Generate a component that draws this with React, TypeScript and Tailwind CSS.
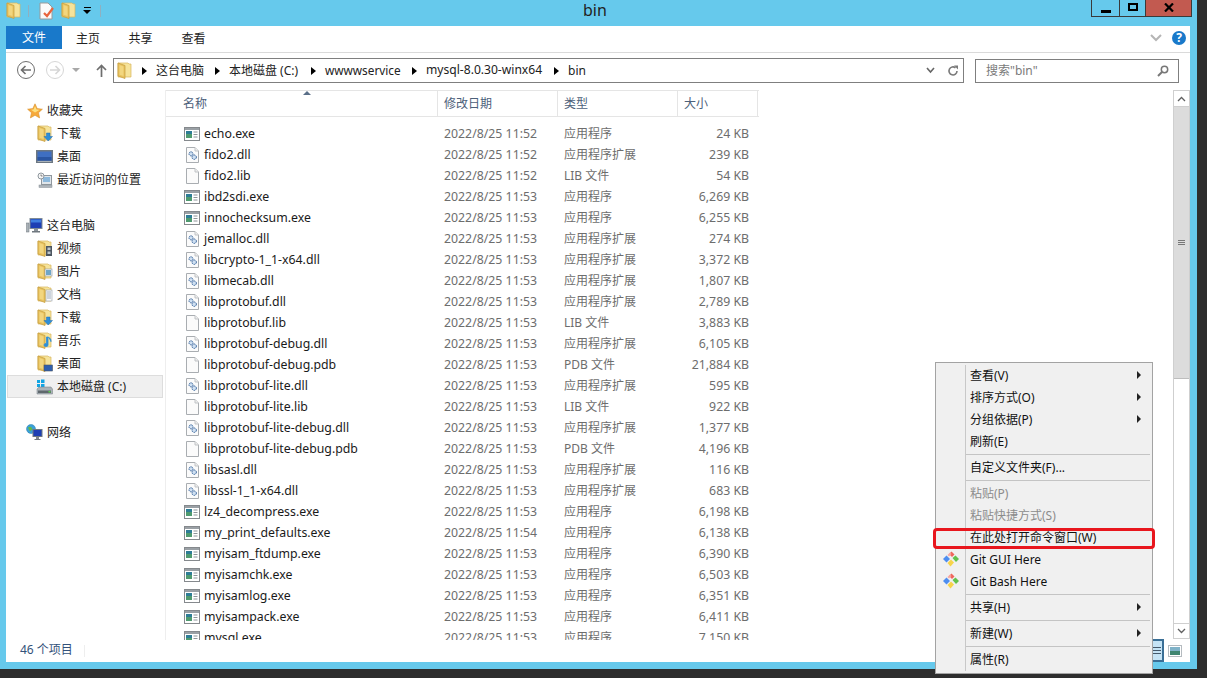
const EXT = '应用程序扩展';
const APP = '应用程序';
const LIB = 'LIB 文件';
const PDB = 'PDB 文件';

const files = [
    ['echo.exe', '11:52', APP, '24 KB'],
    ['fido2.dll', '11:52', EXT, '239 KB'],
    ['fido2.lib', '11:52', LIB, '54 KB'],
    ['ibd2sdi.exe', '11:53', APP, '6,269 KB'],
    ['innochecksum.exe', '11:53', APP, '6,255 KB'],
    ['jemalloc.dll', '11:53', EXT, '274 KB'],
    ['libcrypto-1_1-x64.dll', '11:53', EXT, '3,372 KB'],
    ['libmecab.dll', '11:53', EXT, '1,807 KB'],
    ['libprotobuf.dll', '11:53', EXT, '2,789 KB'],
    ['libprotobuf.lib', '11:53', LIB, '3,883 KB'],
    ['libprotobuf-debug.dll', '11:53', EXT, '6,105 KB'],
    ['libprotobuf-debug.pdb', '11:53', PDB, '21,884 KB'],
    ['libprotobuf-lite.dll', '11:53', EXT, '595 KB'],
    ['libprotobuf-lite.lib', '11:53', LIB, '922 KB'],
    ['libprotobuf-lite-debug.dll', '11:53', EXT, '1,377 KB'],
    ['libprotobuf-lite-debug.pdb', '11:53', PDB, '4,196 KB'],
    ['libsasl.dll', '11:53', EXT, '116 KB'],
    ['libssl-1_1-x64.dll', '11:53', EXT, '683 KB'],
    ['lz4_decompress.exe', '11:53', APP, '6,198 KB'],
    ['my_print_defaults.exe', '11:54', APP, '6,138 KB'],
    ['myisam_ftdump.exe', '11:53', APP, '6,390 KB'],
    ['myisamchk.exe', '11:53', APP, '6,503 KB'],
    ['myisamlog.exe', '11:53', APP, '6,351 KB'],
    ['myisampack.exe', '11:53', APP, '6,411 KB'],
    ['mysql.exe', '11:53', APP, '7,150 KB'],
];

function Folder({ overlay }: { overlay?: React.ReactNode }) {
    return (
        <svg width="16" height="17" viewBox="0 0 16 17">
            <path d="M1 1h10l1 1h2v13H1z" fill="#f6e39a" stroke="#d8b65c" strokeWidth="0.700" />
            <path d="M1 1l7 2.500V16.500L1 14z" fill="#e8c25f" stroke="#c49c3c" strokeWidth="0.700" />
            <path d="M2.500 3l4 1.500v9.500l-4-1.300z" fill="#f2d67f" />
            {overlay}
        </svg>
    );
}

function ExeIcon() {
    return (
        <svg width="16" height="14" viewBox="0 0 16 14">
            <rect x="0.500" y="0.500" width="15" height="13" fill="#fff" stroke="#85898d" />
            <rect x="1" y="1" width="14" height="2" fill="#9aa0a5" />
            <rect x="2" y="4" width="6" height="7" fill="#2e7d96" />
            <rect x="2" y="7" width="6" height="4" fill="#4f9a6f" />
            <path d="M9.500 5h4M9.500 7.500h4M9.500 10h4" stroke="#8d9399" />
        </svg>
    );
}

function PageIcon({ dll }: { dll?: boolean }) {
    return (
        <svg width="13" height="16" viewBox="0 0 13 16">
            <path d="M0.500 0.500h8.500l3.500 3.500v11.500h-12z" fill="#fbfbfb" stroke="#a9adb1" />
            <path d="M9 0.500v3.500h3.500" fill="#eee" stroke="#c0c3c6" />
            {dll && (
                <g fill="#cfe0f2" stroke="#35629a" strokeWidth="1">
                    <circle cx="5" cy="6.800" r="2" strokeDasharray="1.500 0.700" />
                    <circle cx="8.200" cy="10.200" r="2.200" strokeDasharray="1.500 0.700" />
                </g>
            )}
        </svg>
    );
}

function FileIcon({ name }: { name: string }) {
    if (name.endsWith('.exe')) return <ExeIcon />;
    return <PageIcon dll={name.endsWith('.dll')} />;
}

const sideIcons: Record<string, React.ReactNode> = {
    download: (
        <Folder overlay={<path d="M9.500 8h3.500v3.500h2.500L11.200 16 7 11.500h2.500z" fill="#2f8fd8" stroke="#1e6fb5" strokeWidth="0.500" />} />
    ),
    desktop: (
        <svg width="17" height="13" viewBox="0 0 17 13">
            <rect x="0.500" y="0.500" width="16" height="12" fill="#6c7782" stroke="#6c7782" />
            <rect x="1.500" y="1.500" width="14" height="9" fill="#3f6fc2" />
            <rect x="1.500" y="7" width="14" height="3.500" fill="#2a55a2" />
            <rect x="1.500" y="11" width="14" height="1" fill="#aab2b8" />
        </svg>
    ),
    recent: (
        <svg width="16" height="16" viewBox="0 0 16 16">
            <rect x="4.500" y="3.500" width="10" height="9" fill="#dfe5ea" stroke="#8f979e" />
            <rect x="6" y="5" width="7" height="5" fill="#8db9dc" />
            <rect x="2" y="13" width="13" height="2.500" fill="#aeb5bb" stroke="#878e95" strokeWidth="0.500" />
            <circle cx="4" cy="4" r="3" fill="#f5f5f5" stroke="#8f979e" />
            <path d="M4 2.500V4h1.500" stroke="#555" strokeWidth="0.700" fill="none" />
        </svg>
    ),
    video: <Folder overlay={<g><rect x="9" y="6" width="6" height="10" fill="#4c5660" /><path d="M10.500 7.500h3v2.500h-3zM10.500 11.500h3v2.500h-3z" fill="#b9c4cc" /></g>} />,
    picture: <Folder overlay={<g><rect x="8" y="6" width="7" height="7" fill="#eef2f5" stroke="#8f979e" strokeWidth="0.600" /><rect x="9" y="7" width="5" height="5" fill="#6fa6c8" /></g>} />,
    doc: <Folder overlay={<g><rect x="9" y="4" width="6" height="11" fill="#f7f8f9" stroke="#9aa1a7" strokeWidth="0.600" /><path d="M10 6h4M10 8h4M10 10h4M10 12h4" stroke="#7f92a6" strokeWidth="0.700" /></g>} />,
    music: <Folder overlay={<path d="M11 5v8a2 1.500 0 1 1-1.500-1.400V5zM11 5c2 1 3.500 2 3 5" fill="#2f8fd8" stroke="#2f8fd8" strokeWidth="0.800" />} />,
    desk2: <Folder overlay={<g><rect x="7" y="10" width="8.500" height="6" fill="#2f5fae" stroke="#4c5660" strokeWidth="0.600" /></g>} />,
    drive: (
        <svg width="17" height="16" viewBox="0 0 17 16">
            <path d="M1 1h3v3H1zM5 0.500h3.500v3.500H5zM1 5h3v3H1zM5 5h3.500v3H5z" fill="#12a5e4" />
            <path d="M1 10l2-2h12l1.500 2v5h-15.500z" fill="#aab3b8" stroke="#737b80" strokeWidth="0.500" />
            <rect x="2" y="11.500" width="13" height="2.500" fill="#5f686d" />
            <rect x="12.500" y="12" width="2" height="1.500" fill="#58d04a" />
        </svg>
    ),
    star: (
        <svg width="16" height="16" viewBox="0 0 16 16">
            <path d="M8 0.800l2.200 4.800 5.200 0.600-3.900 3.500 1.100 5.200L8 12.300l-4.600 2.600 1.100-5.200L0.600 6.200l5.200-0.600z" fill="#f6a93b" stroke="#d9912c" strokeWidth="0.600" />
            <path d="M8 3l1.500 3.400 3.300.4L8 9.500 4 6.800l2.600-.4z" fill="#fde07f" />
        </svg>
    ),
    pc: (
        <svg width="17" height="15" viewBox="0 0 17 15">
            <rect x="4" y="0.500" width="12" height="10" fill="#1d3fb4" stroke="#7f8b96" />
            <rect x="5" y="1.500" width="10" height="3" fill="#3f7fe0" />
            <rect x="8" y="11" width="4" height="2" fill="#8b939a" />
            <rect x="6" y="13" width="8" height="1.500" fill="#6f777e" />
            <rect x="0.500" y="5" width="2.500" height="9" fill="#aab2b8" stroke="#6d757c" strokeWidth="0.500" />
        </svg>
    ),
    net: (
        <svg width="17" height="17" viewBox="0 0 17 17">
            <circle cx="5" cy="5" r="4.500" fill="#3aa0d8" stroke="#2b7cab" strokeWidth="0.500" />
            <path d="M2 3.500c2-1.500 3-.5 4 .5s-1 3-2 3-1-2-2-3.500z" fill="#67b846" />
            <rect x="7" y="5.500" width="9" height="7" fill="#1d3fb4" stroke="#6e7880" />
            <rect x="10" y="13" width="3" height="2" fill="#7f878e" />
            <rect x="8.500" y="15" width="6" height="1" fill="#6f777e" />
        </svg>
    ),
};

const sidebar = [
    { top: true, icon: 'star', label: '收藏夹' },
    { icon: 'download', label: '下载' },
    { icon: 'desktop', label: '桌面' },
    { icon: 'recent', label: '最近访问的位置' },
    { gap: true, top: true, icon: 'pc', label: '这台电脑' },
    { icon: 'video', label: '视频' },
    { icon: 'picture', label: '图片' },
    { icon: 'doc', label: '文档' },
    { icon: 'download', label: '下载' },
    { icon: 'music', label: '音乐' },
    { icon: 'desk2', label: '桌面' },
    { icon: 'drive', label: '本地磁盘 (C:)', selected: true },
    { gap: true, top: true, icon: 'net', label: '网络' },
];

function Crumb() {
    return <span className="shrink-0 w-0 h-0 border-y-[4px] border-y-transparent border-l-[5px] border-l-black" />;
}

function GitIcon() {
    return (
        <svg width="16" height="16" viewBox="0 0 16 16">
            <path d="M8.500 0.500l3 3-2.500 2.500-3-3z" fill="#f0655a" />
            <path d="M0 8l3.500-3.500L7 8l-3.500 3.500z" fill="#4e8ef0" />
            <path d="M9.500 7l3-2.500L16 8l-3 3z" fill="#62c24c" />
            <path d="M4.500 12l3.500-3.500 3 3-3.500 4z" fill="#f7d44a" />
            <path d="M7 1.500l1.500 1.500L6 5.500 4.500 4z" fill="#f7a6a0" />
        </svg>
    );
}

function MenuItem({ label, arrow, off, icon }: { label: string; arrow?: boolean; off?: boolean; icon?: boolean }) {
    return (
        <div className={`h-[22px] flex items-center ${off ? 'text-[#8c8c8c]' : 'text-[#111]'}`}>
            <span className="w-[30px] flex justify-center">{icon && <GitIcon />}</span>
            <span className="ml-[4px] pt-[2px] flex-1">{label}</span>
            {arrow && <span className="mr-[11px] w-0 h-0 border-y-[4px] border-y-transparent border-l-[4px] border-l-[#222]" />}
        </div>
    );
}

function MenuSep() {
    return (
        <div className="h-[4px] flex items-center pl-[30px] pr-[2px]">
            <div className="h-[1px] w-full bg-[#c4c4c4]" />
        </div>
    );
}

function ContextMenu() {
    return (
        <div className="absolute left-[935px] top-[362px] w-[218px] h-[312px] bg-[#f0f0f0] border border-[#a3a3a3] py-[1px] overflow-hidden">
            <div className="absolute left-[29px] top-[2px] bottom-[2px] w-[1px] bg-[#c8c8c8]" />
            <div className="relative">
                <MenuItem label="查看(V)" arrow />
                <MenuItem label="排序方式(O)" arrow />
                <MenuItem label="分组依据(P)" arrow />
                <MenuItem label="刷新(E)" />
                <MenuSep />
                <MenuItem label="自定义文件夹(F)..." />
                <MenuSep />
                <MenuItem label="粘贴(P)" off />
                <MenuItem label="粘贴快捷方式(S)" off />
                <MenuItem label="在此处打开命令窗口(W)" />
                <MenuItem label="Git GUI Here" icon />
                <MenuItem label="Git Bash Here" icon />
                <MenuSep />
                <MenuItem label="共享(H)" arrow />
                <MenuSep />
                <MenuItem label="新建(W)" arrow />
                <MenuSep />
                <MenuItem label="属性(R)" />
            </div>
        </div>
    );
}

export default function App() {
    return (
        <div className="relative w-[1207px] h-[678px] bg-[#2d2d2d] overflow-hidden font-['Noto_Sans','Noto_Sans_CJK_SC',sans-serif] text-[12px] leading-none">
            <div className="w-[1197px] h-[669px] bg-[#66c9ec] flex flex-col">
                {/* title bar */}
                <div className="h-[26px] flex shrink-0">
                    <div className="w-[583px] flex items-center pl-[6px] pb-[5px]">
                        <Folder />
                        <span className="ml-[6px] w-[1px] h-[12px] bg-[#8fb0c0]" />
                        <span className="ml-[10px]">
                            <svg width="16" height="18" viewBox="0 0 16 18">
                                <path d="M1 1h8l4 4v12H1z" fill="#fafafa" stroke="#9a9a9a" />
                                <path d="M5 11l3 3 6-8" fill="none" stroke="#e8643c" strokeWidth="2.200" />
                            </svg>
                        </span>
                        <span className="ml-[6px]"><Folder /></span>
                        <span className="ml-[6px] flex flex-col items-center gap-[2px]">
                            <span className="w-[7px] h-[1px] bg-black" />
                            <span className="w-0 h-0 border-x-[4px] border-x-transparent border-t-[4px] border-t-black" />
                        </span>
                        <span className="ml-[9px] w-[1px] h-[12px] bg-[#8fb0c0]" />
                    </div>
                    <div className="text-[16px] text-[#222] pt-[2px]">bin</div>
                    <div className="ml-auto mr-[5px] h-[17px] w-[101px] flex border border-t-0 border-[#3a3a3a]">
                        <div className="w-[28px] flex items-center justify-center border-r border-[#3a3a3a] pt-[6px]">
                            <span className="w-[10px] h-[3px] bg-black" />
                        </div>
                        <div className="w-[26px] flex items-center justify-center border-r border-[#3a3a3a] pb-[3px]">
                            <span className="w-[10px] h-[8px] border-2 border-black" />
                        </div>
                        <div className="flex-1 bg-[#c25a50] flex items-center justify-center pb-[2px]">
                            <svg width="10" height="9" viewBox="0 0 10 9">
                                <path d="M1 0.500l8 8M9 0.500l-8 8" stroke="#000" strokeWidth="2.200" />
                            </svg>
                        </div>
                    </div>
                </div>

                {/* window body */}
                <div className="ml-[6px] mr-[7px] h-[636px] bg-white flex flex-col text-[#222]">
                    <div className="h-[27px] shrink-0 flex border-b border-[#dadada]">
                        <div className="w-[56px] h-[23px] bg-[#1979ca] text-white flex items-center justify-center">文件</div>
                        <div className="w-[52px] flex items-center justify-center pb-[1px]">主页</div>
                        <div className="w-[53px] flex items-center justify-center pb-[1px]">共享</div>
                        <div className="w-[53px] flex items-center justify-center pb-[1px]">查看</div>
                        <div className="ml-auto flex items-center pr-[4px] pb-[2px]">
                            <svg width="12" height="8" viewBox="0 0 12 8" className="mr-[10px]">
                                <path d="M1 1l5 5 5-5" fill="none" stroke="#b5b5b5" strokeWidth="2" />
                            </svg>
                            <span className="w-[14px] h-[14px] rounded-full bg-[#1979ca] text-white font-bold text-[12px] flex items-center justify-center">?</span>
                        </div>
                    </div>

                    {/* nav row */}
                    <div className="h-[37px] shrink-0 flex items-start pt-[5px] pl-[11px]">
                        <div className="flex items-center h-[24px] w-[96px] shrink-0">
                            <svg width="18" height="18" viewBox="0 0 18 18">
                                <circle cx="9" cy="9" r="8.500" fill="#fff" stroke="#6e6e6e" />
                                <path d="M14 9H5M8.500 5L4.500 9l4 4" fill="none" stroke="#6e6e6e" strokeWidth="1.600" />
                            </svg>
                            <svg width="18" height="18" viewBox="0 0 18 18" className="ml-[11px]">
                                <circle cx="9" cy="9" r="8.500" fill="#fff" stroke="#d6d6d6" />
                                <path d="M4 9h9M9.500 5l4 4-4 4" fill="none" stroke="#d6d6d6" strokeWidth="1.600" />
                            </svg>
                            <span className="ml-[8px] w-0 h-0 border-x-[4px] border-x-transparent border-t-[4px] border-t-[#a8a8a8]" />
                            <svg width="11" height="13" viewBox="0 0 11 13" className="ml-[16px]">
                                <path d="M5.500 13V2M1 6l4.500-4.500L10 6" fill="none" stroke="#6e6e6e" strokeWidth="1.700" />
                            </svg>
                        </div>
                        <div className="w-[851px] h-[25px] shrink-0 border border-[#7f7f7f] flex items-center pl-[3px] text-[#222]">
                            <Folder />
                            <span className="ml-[9px] flex"><Crumb /></span>
                            <span className="ml-[9px] w-[59px] whitespace-nowrap">这台电脑</span>
                            <Crumb />
                            <span className="ml-[9px] w-[82px] whitespace-nowrap">本地磁盘 (C:)</span>
                            <Crumb />
                            <span className="ml-[9px] w-[87px] whitespace-nowrap text-[11.800px]">wwwwservice</span>
                            <Crumb />
                            <span className="ml-[9px] w-[128px] whitespace-nowrap text-[12.100px]">mysql-8.0.30-winx64</span>
                            <Crumb />
                            <span className="ml-[9px]">bin</span>
                            <div className="ml-auto flex items-center pr-[4px]">
                                <svg width="9" height="7" viewBox="0 0 9 7" className="mr-[12px]">
                                    <path d="M1 1l3.500 4L8 1" fill="none" stroke="#666" strokeWidth="1.600" />
                                </svg>
                                <svg width="12" height="12" viewBox="0 0 12 12">
                                    <path d="M10 6a4 4 0 1 1-1.500-3.200" fill="none" stroke="#7a7a7a" strokeWidth="1.600" />
                                    <path d="M7 0.500h4v4z" fill="#7a7a7a" />
                                </svg>
                            </div>
                        </div>
                        <div className="ml-[11px] mt-[1px] w-[204px] h-[24px] shrink-0 border border-[#7f7f7f] flex items-center pl-[10px] text-[#7a7a7a]">
                            <span>搜索"bin"</span>
                            <svg width="12" height="12" viewBox="0 0 12 12" className="ml-auto mr-[9px]">
                                <circle cx="7.500" cy="4.500" r="3.200" fill="none" stroke="#777" strokeWidth="1.500" />
                                <path d="M5 7l-4 4" stroke="#777" strokeWidth="2" />
                            </svg>
                        </div>
                    </div>

                    {/* main */}
                    <div className="h-[550px] shrink-0 flex">
                        <div className="w-[160px] shrink-0 border-r border-[#eeeeee] pt-[9px] pl-[1px] pr-[2px]">
                            {sidebar.map((s, i) => (
                                <div
                                    key={i}
                                    className={`h-[23px] flex items-center border ${s.gap ? 'mt-[23px]' : ''} ${s.selected ? 'bg-[#f0f0f0] border-[#dddddd]' : 'border-transparent'} ${s.top ? 'pl-[18px]' : 'pl-[28px]'}`}
                                >
                                    <span className="w-[17px] flex justify-center">{sideIcons[s.icon]}</span>
                                    <span className="ml-[4px] whitespace-nowrap text-[#222]">{s.label}</span>
                                </div>
                            ))}
                        </div>

                        <div className="flex-1 overflow-hidden">
                            <div className="relative w-[593px] h-[27px] flex border-y border-[#e5e5e5] text-[#4c607a]">
                                <div className="w-[272px] pl-[17px] flex items-center border-r border-[#e5e5e5]">名称</div>
                                <div className="w-[120px] pl-[6px] flex items-center border-r border-[#e5e5e5]">修改日期</div>
                                <div className="w-[120px] pl-[6px] flex items-center border-r border-[#e5e5e5]">类型</div>
                                <div className="w-[80px] pl-[6px] flex items-center border-r border-[#e5e5e5]">大小</div>
                                <span className="absolute left-[137px] top-0 w-0 h-0 border-x-[4px] border-x-transparent border-b-[4px] border-b-[#5a6f88]" />
                            </div>
                            <div className="pt-[6px] text-[12.300px]">
                                {files.map(([name, time, type, size]) => (
                                    <div key={name} className="h-[21px] flex items-center">
                                        <span className="ml-[18px] w-[16px] flex justify-center shrink-0"><FileIcon name={name} /></span>
                                        <span className="ml-[4px] pt-[1px] w-[240px] text-[#1a1a1a] whitespace-nowrap">{name}</span>
                                        <span className="pt-[1px] w-[120px] text-[#6d6d6d] whitespace-nowrap">2022/8/25 {time}</span>
                                        <span className="w-[100px] text-[12px] text-[#6d6d6d] whitespace-nowrap">{type}</span>
                                        <span className="pt-[1px] w-[85px] text-right text-[#6d6d6d] whitespace-nowrap">{size}</span>
                                    </div>
                                ))}
                            </div>
                        </div>

                        {/* scrollbar */}
                        <div className="w-[17px] shrink-0 h-[549px] border-l border-r border-[#cfcfcf] flex flex-col">
                            <div className="h-[17px] border-y border-[#cfcfcf] flex items-center justify-center">
                                <svg width="9" height="6" viewBox="0 0 9 6"><path d="M1 5l3.500-3.500L8 5" fill="none" stroke="#606060" strokeWidth="1.300" /></svg>
                            </div>
                            <div className="h-[272px] bg-[#dcdcdc] border-b border-[#bdbdbd] flex items-center justify-center">
                                <span className="w-[7px] h-[5px] border-y border-[#777] flex items-center"><span className="w-full h-[1px] bg-[#777]" /></span>
                            </div>
                            <div className="flex-1" />
                            <div className="h-[16px] border-y border-[#cfcfcf] flex items-center justify-center">
                                <svg width="9" height="6" viewBox="0 0 9 6"><path d="M1 1l3.500 3.500L8 1" fill="none" stroke="#606060" strokeWidth="1.300" /></svg>
                            </div>
                        </div>
                    </div>

                    {/* status bar */}
                    <div className="h-[22px] shrink-0 flex items-center pl-[14px] text-[#33527a]">
                        <span className="pb-[2px]">46 个项目</span>
                        <span className="ml-[11px] w-[1px] h-[12px] bg-[#eeeeee]" />
                        <div className="ml-auto flex items-center mr-[8px]">
                            <span className="w-[19px] h-[23px] -mt-[1px] bg-[#c5e3f5] border-2 border-[#3a6f96] flex flex-col items-end justify-center gap-[2px] pr-[1px]">
                                <span className="w-[8px] h-[1px] bg-[#44586b]" />
                                <span className="w-[8px] h-[1px] bg-[#44586b]" />
                                <span className="w-[8px] h-[1px] bg-[#44586b]" />
                            </span>
                            <svg width="14" height="12" viewBox="0 0 14 12" className="ml-[4px]">
                                <rect x="0.500" y="0.500" width="13" height="11" fill="#fff" stroke="#b5bbc0" />
                                <rect x="2" y="2" width="10" height="8" fill="#7fb2c8" />
                                <rect x="2" y="6" width="10" height="4" fill="#3f8570" />
                            </svg>
                        </div>
                    </div>
                </div>
            </div>

            <ContextMenu />
            <div className="absolute left-[933px] top-[528px] w-[222px] h-[21px] border-[3px] border-[#e8161d] rounded-[4px]" />
        </div>
    );
}
